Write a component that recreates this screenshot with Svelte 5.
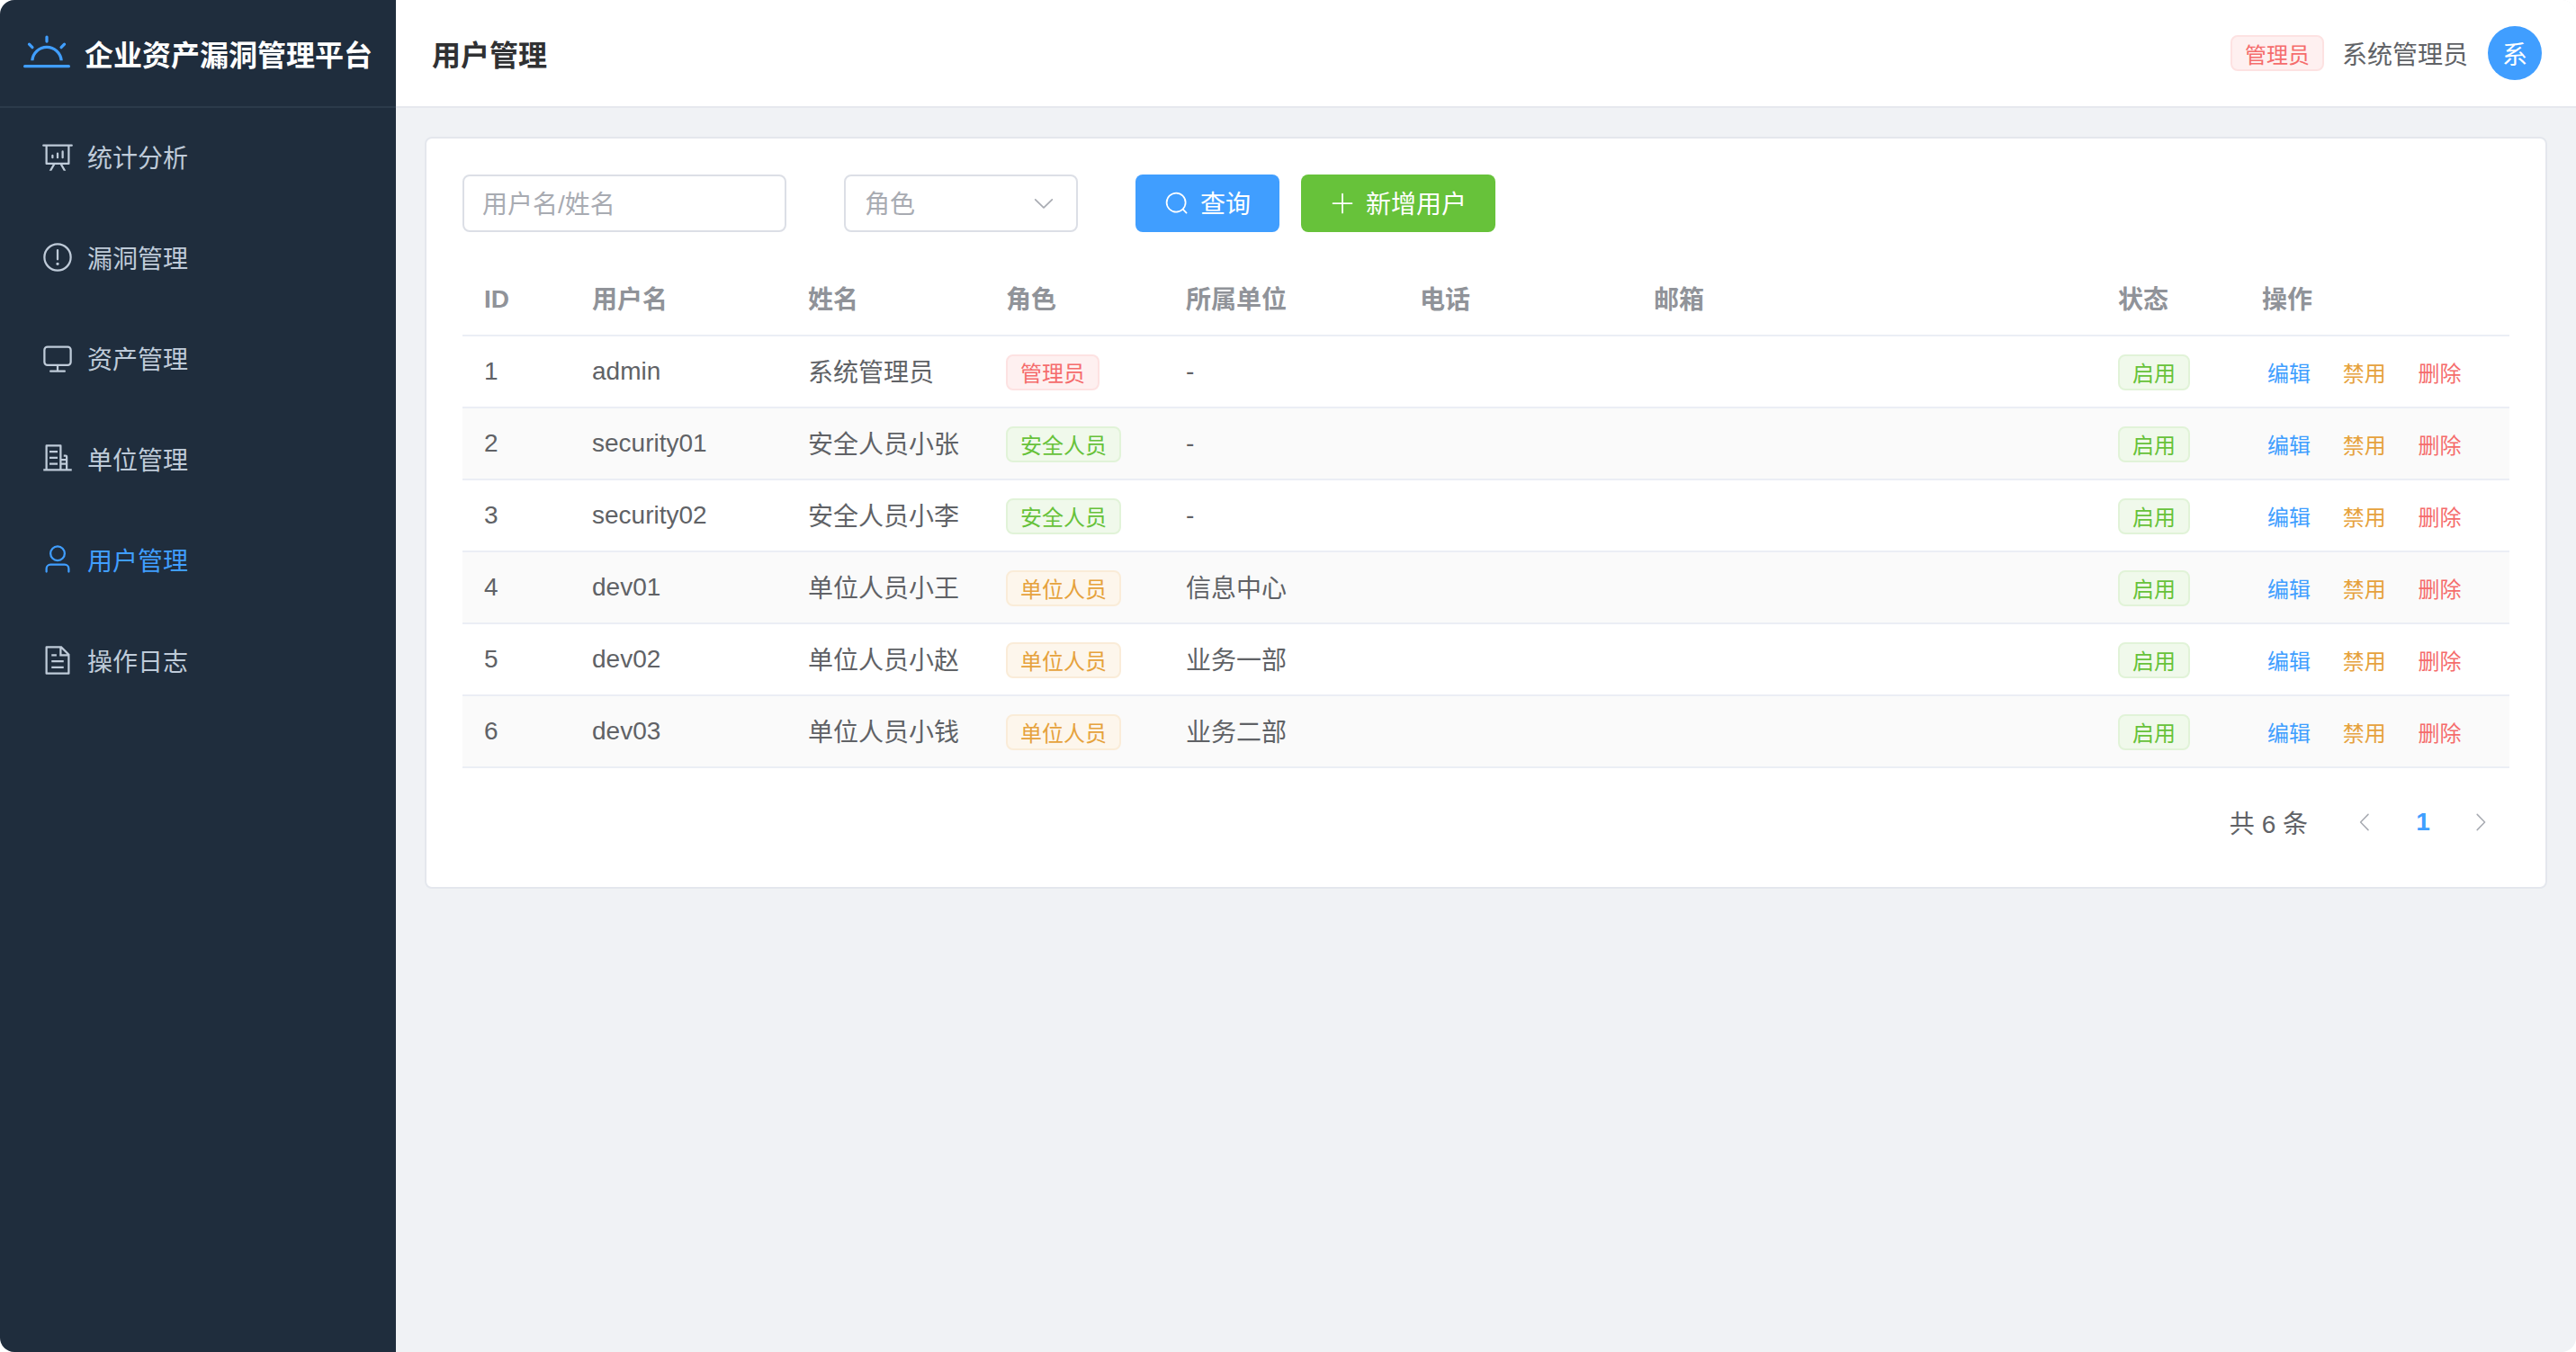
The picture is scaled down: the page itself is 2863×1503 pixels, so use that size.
<script>
  const menu = [
    { label: '统计分析', icon: 'analysis' },
    { label: '漏洞管理', icon: 'warning' },
    { label: '资产管理', icon: 'monitor' },
    { label: '单位管理', icon: 'office' },
    { label: '用户管理', icon: 'user', active: true },
    { label: '操作日志', icon: 'document' }
  ];

  const icons = {
    analysis: 'm665.216 768 110.848 192h-73.856L591.36 768H433.024L322.176 960H248.32l110.848-192H160a32 32 0 0 1-32-32V192H64a32 32 0 0 1 0-64h896a32 32 0 1 1 0 64h-64v544a32 32 0 0 1-32 32zM832 192H192v512h640zM352 448a32 32 0 0 1 32 32v64a32 32 0 0 1-64 0v-64a32 32 0 0 1 32-32m160-64a32 32 0 0 1 32 32v128a32 32 0 0 1-64 0V416a32 32 0 0 1 32-32m160-64a32 32 0 0 1 32 32v192a32 32 0 1 1-64 0V352a32 32 0 0 1 32-32',
    warning: 'M512 64a448 448 0 1 1 0 896 448 448 0 0 1 0-896m0 832a384 384 0 0 0 0-768 384 384 0 0 0 0 768m48-176a48 48 0 1 1-96 0 48 48 0 0 1 96 0m-48-464a32 32 0 0 1 32 32v288a32 32 0 0 1-64 0V288a32 32 0 0 1 32-32',
    monitor: 'M544 768v128h192a32 32 0 1 1 0 64H288a32 32 0 1 1 0-64h192V768H192A128 128 0 0 1 64 640V256a128 128 0 0 1 128-128h640a128 128 0 0 1 128 128v384a128 128 0 0 1-128 128zM192 192a64 64 0 0 0-64 64v384a64 64 0 0 0 64 64h640a64 64 0 0 0 64-64V256a64 64 0 0 0-64-64z',
    office: 'M192 128v704h384V128zm-32-64h448a32 32 0 0 1 32 32v736h128V448H704v-64h64a64 64 0 0 1 64 64v384h128v64H64v-64h64V96a32 32 0 0 1 32-32zM256 256h256v64H256zm0 192h256v64H256zm0 192h256v64H256zm384-128h128v64H640zm0 128h128v64H640z',
    user: 'M512 512a192 192 0 1 0 0-384 192 192 0 0 0 0 384m0 64a256 256 0 1 1 0-512 256 256 0 0 1 0 512m320 320v-96a96 96 0 0 0-96-96H288a96 96 0 0 0-96 96v96a32 32 0 1 1-64 0v-96a160 160 0 0 1 160-160h448a160 160 0 0 1 160 160v96a32 32 0 1 1-64 0',
    document: 'M832 384H576V128H192v768h640zm-26.496-64L640 154.496V320zM160 64h480l256 256v608a32 32 0 0 1-32 32H160a32 32 0 0 1-32-32V96a32 32 0 0 1 32-32m160 448h384v64H320zm0-192h160v64H320zm0 384h384v64H320z'
  };

  const sunrise = 'M32 768h960a32 32 0 1 1 0 64H32a32 32 0 1 1 0-64m129.408-96a352 352 0 0 1 701.184 0h-64.32a288 288 0 0 0-572.544 0zM512 128a32 32 0 0 1 32 32v96a32 32 0 0 1-64 0v-96a32 32 0 0 1 32-32m407.296 168.704a32 32 0 0 1 0 45.248l-67.84 67.84a32 32 0 1 1-45.248-45.248l67.84-67.84a32 32 0 0 1 45.248 0zm-814.592 0a32 32 0 0 1 45.248 0l67.84 67.84a32 32 0 1 1-45.248 45.248l-67.84-67.84a32 32 0 0 1 0-45.248';

  const roles = {
    admin: { text: '管理员', kind: 'danger' },
    security: { text: '安全人员', kind: 'success' },
    unit: { text: '单位人员', kind: 'warning' }
  };

  const users = [
    { id: 1, username: 'admin', name: '系统管理员', role: 'admin', org: '-' },
    { id: 2, username: 'security01', name: '安全人员小张', role: 'security', org: '-' },
    { id: 3, username: 'security02', name: '安全人员小李', role: 'security', org: '-' },
    { id: 4, username: 'dev01', name: '单位人员小王', role: 'unit', org: '信息中心' },
    { id: 5, username: 'dev02', name: '单位人员小赵', role: 'unit', org: '业务一部' },
    { id: 6, username: 'dev03', name: '单位人员小钱', role: 'unit', org: '业务二部' }
  ];

  const columns = ['ID', '用户名', '姓名', '角色', '所属单位', '电话', '邮箱', '状态', '操作'];
</script>

<div class="layout">
  <aside class="sidebar">
    <div class="logo">
      <svg class="logo-icon" viewBox="0 0 1024 1024"><path fill="currentColor" d={sunrise} /></svg>
      <span>企业资产漏洞管理平台</span>
    </div>
    <nav>
      {#each menu as item}
        <div class="menu-item" class:active={item.active}>
          <svg class="menu-icon" viewBox="0 0 1024 1024"><path fill="currentColor" d={icons[item.icon]} /></svg>
          <span>{item.label}</span>
        </div>
      {/each}
    </nav>
  </aside>

  <div class="content">
    <header class="topbar">
      <h1>用户管理</h1>
      <div class="account">
        <span class="tag danger">管理员</span>
        <span class="account-name">系统管理员</span>
        <span class="avatar">系</span>
      </div>
    </header>

    <main class="main">
      <section class="card">
        <div class="toolbar">
          <div class="input">用户名/姓名</div>
          <div class="select">
            <span class="label">角色</span>
            <svg viewBox="0 0 1024 1024"><path fill="currentColor" d="M831.872 340.864 512 652.672 192.128 340.864a30.592 30.592 0 0 0-42.752 0 29.12 29.12 0 0 0 0 41.6L489.664 714.24a32 32 0 0 0 44.672 0l340.288-331.712a29.12 29.12 0 0 0 0-41.728 30.592 30.592 0 0 0-42.752 0z" /></svg>
          </div>
          <button class="btn primary">
            <svg viewBox="0 0 1024 1024"><path fill="currentColor" d="m795.904 750.72 124.992 124.928a32 32 0 0 1-45.248 45.248L750.656 795.904a416 416 0 1 1 45.248-45.248zM480 832a352 352 0 1 0 0-704 352 352 0 0 0 0 704" /></svg>
            <span class="label">查询</span>
          </button>
          <button class="btn success">
            <svg viewBox="0 0 1024 1024"><path fill="currentColor" d="M480 480V128a32 32 0 0 1 64 0v352h352a32 32 0 0 1 0 64H544v352a32 32 0 1 1-64 0V544H128a32 32 0 0 1 0-64z" /></svg>
            <span class="label">新增用户</span>
          </button>
        </div>

        <table>
          <colgroup>
            <col class="col-id" /><col class="col-username" /><col class="col-name" /><col class="col-role" /><col class="col-org" /><col class="col-phone" /><col class="col-mail" /><col class="col-state" /><col />
          </colgroup>
          <thead>
            <tr>
              {#each columns as col}
                <th>{col}</th>
              {/each}
            </tr>
          </thead>
          <tbody>
            {#each users as user}
              <tr>
                <td>{user.id}</td>
                <td>{user.username}</td>
                <td class="cjk">{user.name}</td>
                <td><span class="tag {roles[user.role].kind}">{roles[user.role].text}</span></td>
                <td class:cjk={user.org !== '-'}>{user.org}</td>
                <td></td>
                <td></td>
                <td><span class="tag success">启用</span></td>
                <td class="actions">
                  <span class="link blue">编辑</span>
                  <span class="link orange">禁用</span>
                  <span class="link red">删除</span>
                </td>
              </tr>
            {/each}
          </tbody>
        </table>

        <div class="pagination">
          <span class="total">共 6 条</span>
          <span class="pager">
            <svg class="arrow" viewBox="0 0 1024 1024"><path fill="currentColor" d="M609.408 149.376 277.76 489.6a32 32 0 0 0 0 44.672l331.648 340.352a29.12 29.12 0 0 0 41.728 0 30.592 30.592 0 0 0 0-42.752L339.264 511.936l311.872-319.872a30.592 30.592 0 0 0 0-42.688 29.12 29.12 0 0 0-41.728 0z" /></svg>
          </span>
          <span class="pager page">1</span>
          <span class="pager">
            <svg class="arrow" viewBox="0 0 1024 1024"><path fill="currentColor" d="M340.864 149.312a30.592 30.592 0 0 0 0 42.752L652.736 512 340.864 831.872a30.592 30.592 0 0 0 0 42.752 29.12 29.12 0 0 0 41.728 0L714.24 534.336a32 32 0 0 0 0-44.672L382.592 149.376a29.12 29.12 0 0 0-41.728 0z" /></svg>
          </span>
        </div>
      </section>
    </main>
  </div>
</div>

<style>
  :global(body) {
    margin: 0;
    background: #fff;
    font-family: "Liberation Sans", "Noto Sans CJK SC", sans-serif;
  }

  .layout {
    display: flex;
    height: 1503px;
    overflow: hidden;
    border-radius: 16px;
    background: #f0f2f5;
  }

  .sidebar {
    width: 440px;
    flex: none;
    background: #1f2d3d;
  }

  .logo {
    display: flex;
    align-items: center;
    gap: 16px;
    height: 120px;
    box-sizing: border-box;
    padding-left: 26px;
    border-bottom: 2px solid #2b3a4b;
    color: #fff;
    font-size: 32px;
    font-weight: 700;
    white-space: nowrap;
  }

  .logo-icon {
    width: 52px;
    height: 52px;
    color: #409eff;
  }

  nav {
    margin-top: -2px;
  }

  .menu-item {
    display: flex;
    align-items: center;
    gap: 17px;
    height: 112px;
    padding-left: 46px;
    color: #bfcbd9;
    font-size: 28px;
  }

  .menu-item.active {
    color: #409eff;
  }

  .menu-icon {
    width: 36px;
    height: 36px;
    margin-right: -2px;
  }

  .content {
    flex: 1;
    min-width: 0;
    display: flex;
    flex-direction: column;
  }

  .topbar {
    display: flex;
    align-items: center;
    justify-content: space-between;
    height: 120px;
    box-sizing: border-box;
    padding: 0 38px 0 40px;
    background: #fff;
    border-bottom: 2px solid #e6e8ee;
  }

  h1 {
    margin: 0;
    font-size: 32px;
    font-weight: 700;
    color: #303133;
  }

  .account {
    display: flex;
    align-items: center;
  }

  .account-name {
    margin-left: 20px;
    font-size: 28px;
    color: #606266;
  }

  .avatar {
    display: flex;
    align-items: center;
    justify-content: center;
    width: 60px;
    height: 60px;
    margin-left: 22px;
    border-radius: 50%;
    background: #409eff;
    color: #fff;
    font-size: 28px;
  }

  .tag {
    display: inline-flex;
    align-items: center;
    height: 40px;
    box-sizing: border-box;
    padding: 0 14px;
    border: 2px solid;
    border-radius: 8px;
    font-size: 24px;
    white-space: nowrap;
  }

  td .tag {
    vertical-align: middle;
    margin-top: 2px;
    padding-bottom: 2px;
  }

  .tag.danger {
    color: #f56c6c;
    background: #fef0f0;
    border-color: #fde2e2;
  }

  .tag.success {
    color: #67c23a;
    background: #f0f9eb;
    border-color: #e1f3d8;
  }

  .tag.warning {
    color: #e6a23c;
    background: #fdf6ec;
    border-color: #faecd8;
  }

  .main {
    padding: 32px;
  }

  .card {
    padding: 40px;
    background: #fff;
    border: 2px solid #e4e7ed;
    border-radius: 8px;
  }

  .toolbar {
    display: flex;
    align-items: center;
    height: 64px;
    margin-bottom: 32px;
  }

  .input,
  .select {
    display: flex;
    align-items: center;
    height: 64px;
    box-sizing: border-box;
    border: 2px solid #dcdfe6;
    border-radius: 8px;
    font-size: 28px;
    color: #a8abb2;
  }

  .input {
    width: 360px;
    padding: 0 0 3px 20px;
    margin-right: 64px;
  }

  .select {
    width: 260px;
    padding: 0 22px 0 21px;
    margin-right: 64px;
    justify-content: space-between;
  }

  .select svg {
    width: 28px;
    height: 28px;
  }

  .label {
    padding-bottom: 3px;
  }

  .btn {
    display: flex;
    align-items: center;
    justify-content: center;
    gap: 12px;
    height: 64px;
    border: none;
    border-radius: 8px;
    color: #fff;
    font-family: inherit;
    font-size: 28px;
  }

  .btn svg {
    width: 28px;
    height: 28px;
  }

  .btn.primary {
    width: 160px;
    background: #409eff;
  }

  .btn.success {
    width: 216px;
    margin-left: 24px;
    background: #67c23a;
  }

  table {
    width: 100%;
    table-layout: fixed;
    border-collapse: separate;
    border-spacing: 0;
    font-size: 28px;
    color: #606266;
  }

  .col-id { width: 120px; }
  .col-username { width: 240px; }
  .col-name { width: 220px; }
  .col-role { width: 200px; }
  .col-org { width: 260px; }
  .col-phone { width: 260px; }
  .col-mail { width: 516px; }
  .col-state { width: 160px; }

  th {
    height: 84px;
    box-sizing: border-box;
    padding: 0 24px;
    text-align: left;
    font-weight: 700;
    color: #909399;
    border-bottom: 2px solid #ebeef5;
  }

  th:first-child {
    padding-top: 3px;
  }

  td {
    height: 80px;
    box-sizing: border-box;
    padding: 0 24px;
    border-bottom: 2px solid #ebeef5;
    white-space: nowrap;
  }

  td.cjk {
    padding-bottom: 3px;
  }

  tbody tr:nth-child(even) td {
    background: #fafafa;
  }

  .actions {
    padding-left: 30px;
  }

  .link {
    display: inline-block;
    margin-right: 28px;
    font-size: 24px;
  }

  .link.blue {
    color: #409eff;
  }

  .link.orange {
    color: #e6a23c;
  }

  .link.red {
    color: #f56c6c;
  }

  .pagination {
    display: flex;
    align-items: center;
    justify-content: flex-end;
    margin-top: 28px;
    height: 64px;
    color: #606266;
    font-size: 28px;
  }

  .total {
    margin-right: 32px;
  }

  .pager {
    display: flex;
    align-items: center;
    justify-content: center;
    width: 64px;
    height: 64px;
  }

  .arrow {
    width: 26px;
    height: 26px;
    color: #a8abb2;
  }

  .page {
    font-weight: 700;
    color: #409eff;
  }
</style>
